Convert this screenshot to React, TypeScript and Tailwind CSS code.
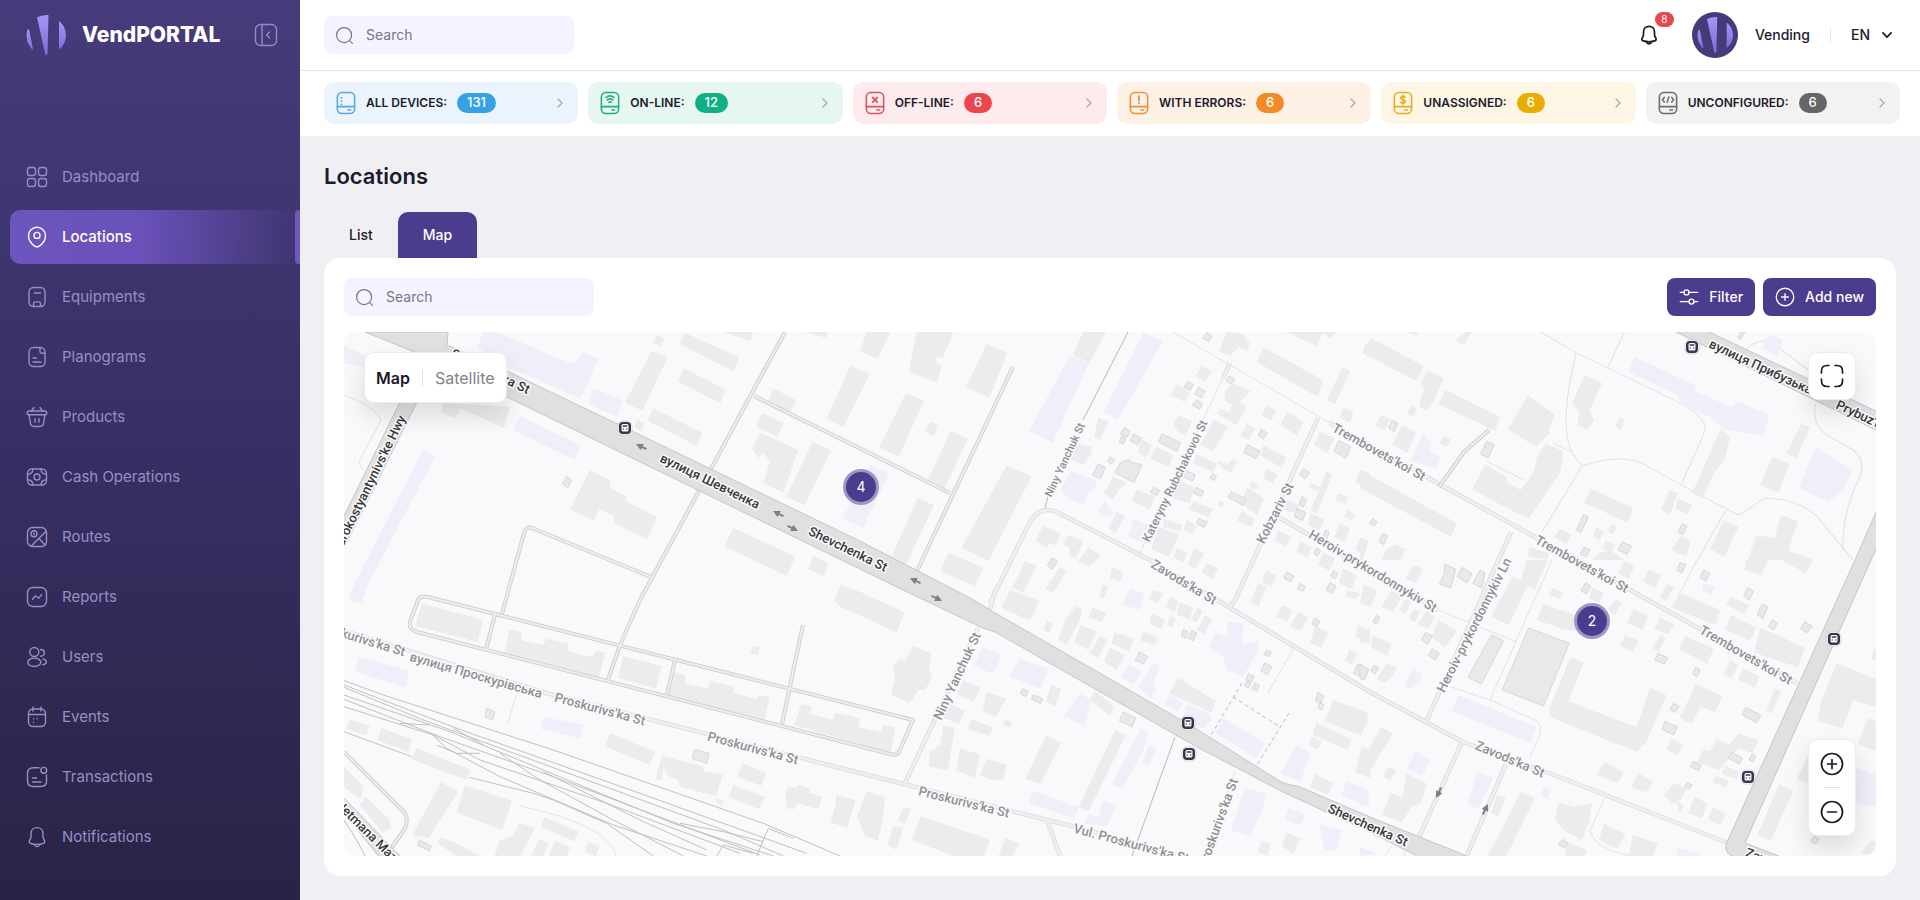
import React from "react";

type IconProps = { children: React.ReactNode; className?: string; width?: number };

function Icon({ children, className = "size-6", width = 1.4 }: IconProps) {
  return (
    <svg viewBox="0 0 24 24" className={className} fill="none" stroke="currentColor" strokeWidth={width} strokeLinecap="round" strokeLinejoin="round" aria-hidden="true">
      {children}
    </svg>
  );
}

const bellPath = (
  <>
    <path d="M12 2.600c-3.600 0-6 2.600-6 6v3.200c0 1.300-.7 2.400-1.400 3.500-.8 1.400-.3 2.800 1.200 3.200 4 1.200 8.400 1.200 12.400 0 1.500-.4 2-1.800 1.200-3.200-.7-1.100-1.400-2.200-1.400-3.500V8.600c0-3.400-2.400-6-6-6Z" />
    <path d="M9.300 19.600c.4 1.300 1.400 2 2.700 2s2.300-.7 2.700-2" />
  </>
);

const menu: { label: string; icon: React.ReactNode; active?: boolean }[] = [
  {
    label: "Dashboard",
    icon: (
      <>
        <rect x="2.500" y="2.500" width="8" height="8" rx="2.500" />
        <rect x="13.500" y="2.500" width="8" height="8" rx="2.500" />
        <rect x="2.500" y="13.500" width="8" height="8" rx="2.500" />
        <rect x="13.500" y="13.500" width="8" height="8" rx="2.500" />
      </>
    ),
  },
  {
    label: "Locations",
    active: true,
    icon: (
      <>
        <path d="M12 2.300c-4.700 0-8.500 3.600-8.500 8.200 0 4.500 3.400 8.800 6.700 10.800 1.200.7 2.400.7 3.600 0 3.300-2 6.700-6.300 6.700-10.800 0-4.600-3.800-8.200-8.500-8.200Z" />
        <circle cx="12" cy="10.400" r="3" />
      </>
    ),
  },
  {
    label: "Equipments",
    icon: (
      <>
        <rect x="4" y="2.500" width="16" height="19" rx="4.500" />
        <path d="M9.500 8h6M8.500 21v-2.500c0-1 .6-1.600 1.600-1.600h3.800c1 0 1.600.6 1.600 1.600V21" />
      </>
    ),
  },
  {
    label: "Planograms",
    icon: (
      <>
        <rect x="4" y="2.500" width="16" height="19" rx="4.500" />
        <path d="M15 2.600v4c0 1 .7 1.700 1.700 1.700H20M8 13h3.500M8 17h8" />
      </>
    ),
  },
  {
    label: "Products",
    icon: (
      <>
        <rect x="2.300" y="6" width="19.400" height="3.800" rx="1.900" />
        <path d="m4 10 1.500 8.500c.3 2 1.500 3 3.500 3h6c2 0 3.200-1 3.500-3L20 10M10 13.800v3.400M14 13.800v3.400M9 2.500 6.500 6M15 2.500 17.500 6" />
      </>
    ),
  },
  {
    label: "Cash Operations",
    icon: (
      <>
        <rect x="2.500" y="4" width="19" height="16" rx="4.500" />
        <circle cx="12" cy="12" r="3" />
        <path d="M8 4.200C7.800 7 6 9 2.700 9.200M16 4.200c.2 2.800 2 4.800 5.300 5M8 19.800c-.2-2.800-2-4.800-5.300-5M16 19.800c.2-2.800 2-4.800 5.300-5" />
      </>
    ),
  },
  {
    label: "Routes",
    icon: (
      <>
        <rect x="2.500" y="2.500" width="19" height="19" rx="5" />
        <circle cx="9" cy="8.800" r="3" />
        <path d="M9 8v1.500M6.500 20.800 20.800 6.500M14 13.500l6 6.500" />
      </>
    ),
  },
  {
    label: "Reports",
    icon: (
      <>
        <rect x="2.500" y="2.500" width="19" height="19" rx="5.500" />
        <path d="m7.500 14.300 2.300-2.900c.4-.4.9-.5 1.300-.1l1.800 1.400c.4.4 1 .3 1.300-.1l2.300-3" />
      </>
    ),
  },
  {
    label: "Users",
    icon: (
      <>
        <circle cx="9.300" cy="7" r="4.500" />
        <ellipse cx="9.300" cy="17.300" rx="6.500" ry="4.200" />
        <path d="M15.500 4.500c2.300 0 3.900 1.300 3.900 3.300s-1.500 3.200-3.600 3.400M18 14c2 .3 3.300 1.300 3.300 2.800s-1.200 2.700-3.600 3" />
      </>
    ),
  },
  {
    label: "Events",
    icon: (
      <>
        <rect x="3.500" y="4" width="17" height="17.500" rx="4.500" />
        <path d="M8 2v4M16 2v4M3.700 9.500h16.600M8.500 13.800h.1M12 13.800h.1M8.500 17.200h.1" />
      </>
    ),
  },
  {
    label: "Transactions",
    icon: (
      <>
        <path d="M14 2.700H8.300c-3.800 0-5.800 2-5.800 5.800v7.200c0 3.800 2 5.800 5.800 5.800h7.400c3.800 0 5.800-2 5.800-5.800V10" />
        <circle cx="18.800" cy="5.300" r="2.900" />
        <path d="M7.500 13h4M7.500 17h8.500" />
      </>
    ),
  },
  { label: "Notifications", icon: bellPath },
];

const stats = [
  { label: "ALL DEVICES:", value: "131", card: "bg-[#ebf4fc]", badge: "bg-[#37a2e2]", icon: "text-[#56a9dc]", mark: <path d="M6 7.500h.1M6 11h.1M6 14.500h.1" strokeWidth="2" /> },
  { label: "ON-LINE:", value: "12", card: "bg-[#e6f6f1]", badge: "bg-[#0fb083]", icon: "text-[#22ad83]", mark: <path d="M6.500 7c2.700-2.200 6.300-2.200 9 0M8 9.600c1.900-1.500 4.100-1.500 6 0M9.600 12.200c.9-.7 1.900-.7 2.800 0" /> },
  { label: "OFF-LINE:", value: "6", card: "bg-[#feebed]", badge: "bg-[#ea474c]", icon: "text-[#dd545d]", mark: <path d="m8.500 7 5 5m0-5-5 5" strokeWidth="2" /> },
  { label: "WITH ERRORS:", value: "6", card: "bg-[#fdf1e6]", badge: "bg-[#f18a27]", icon: "text-[#e99041]", mark: <path d="M11 5.500v5M11 13.300v.2" strokeWidth="2" /> },
  { label: "UNASSIGNED:", value: "6", card: "bg-[#fdf6e4]", badge: "bg-[#e8ad04]", icon: "text-[#e2ae28]", mark: <path d="M13.500 6.800c-.5-.8-1.300-1.100-2.500-1.100-1.500 0-2.500.7-2.500 1.900 0 2.600 5 1.200 5 3.800 0 1.200-1 1.900-2.500 1.900-1.300 0-2.200-.4-2.700-1.300M11 4.500v10" /> },
  { label: "UNCONFIGURED:", value: "6", card: "bg-[#f2f2f3]", badge: "bg-[#666667]", icon: "text-[#6d6d6f]", mark: <path d="M7 6.800 4.800 9.300 7 11.800M15 6.800l2.200 2.500-2.200 2.500M12 6.300l-2 6" /> },
];

function LogoMark({ className }: { className: string }) {
  return (
    <svg viewBox="0 0 40 40" className={className} aria-hidden="true">
      <defs>
        <linearGradient id="mark" x1="0" y1="0" x2="0" y2="1">
          <stop offset="0" stopColor="#a694f8" />
          <stop offset="1" stopColor="#7f6cd6" />
        </linearGradient>
      </defs>
      <g fill="url(#mark)">
        <path d="M11 2.200Q16.500-.2 22.500 0L21.500 38q0 2-1.200 2t-1.300-2Z" />
        <path d="M33 6q7 5.500 7 14.300T33 34.500Z" />
        <path d="M1.500 14.500Q-1 23.500 3 30t4 4L3.300 15.500q-.8-2-1.800-1Z" />
      </g>
    </svg>
  );
}

function SearchField({ id }: { id: string }) {
  return (
    <label htmlFor={id} className="flex h-[38px] w-[250px] items-center gap-3 rounded-lg bg-[#f5f3ff] px-[11px] text-[#787584]">
      <Icon className="size-[19px] shrink-0" width={1.500}>
        <circle cx="11.500" cy="11.500" r="9.500" />
        <path d="m18.500 18.500 3.500 3.500" />
      </Icon>
      <input id={id} type="text" placeholder="Search" aria-label="Search" className="w-full min-w-0 bg-transparent text-sm outline-none placeholder:text-[#787584]" />
    </label>
  );
}

type Tile = { at: string; gray: string; small: string; lilac: string };

const tiles: Tile[] = [
  {
    at: "translate(340 330) scale(.33333)",
    gray:
      "M935,62 983,82 907,242 855,218ZM1035,8 1198,82 1180,124 1020,42ZM1030,115 1156,178 1141,220 1015,155ZM940,235 1086,308 1072,348 922,272ZM890,268 914,280 905,305 882,292ZM950,14 972,24 962,48 938,38ZM1300,175 1368,210 1350,248 1282,218ZM1265,250 1330,278 1314,320 1248,290ZM1262,308 1375,360 1330,488 1270,460 1290,392 1268,370 1256,384 1236,355ZM1418,336 1474,360 1394,526 1338,500ZM1530,108 1590,132 1510,292 1460,266ZM750,420 812,452 808,472 858,500 856,512 952,562 920,628 820,578 824,560 778,538 762,572 690,538ZM1180,594 1366,680 1340,738 1152,648ZM1420,678 1466,700 1452,738 1404,718ZM1502,764 1560,785 1690,845 1670,905 1500,830 1482,810ZM310,220 510,230 492,294 360,235 344,264 303,246ZM1150,6 1240,6 1230,33ZM1400,6 1464,6 1458,24Z",
    small: "M680,440 695,450 684,473 667,463Z",
    lilac:
      "M430,6 470,6 690,100 702,100 730,66 775,86 722,206 470,96 412,50ZM760,175 850,212 832,262 746,222ZM542,258 722,346 704,390 520,300ZM250,356 286,378 60,810 24,800ZM12,44 72,76 74,112 12,100Z",
  },
  {
    at: "translate(340 590) scale(.33333)",
    gray:
      "M245,40 430,90 412,156 226,108ZM508,118 546,126 542,150 610,165 618,146 686,160 684,184 758,202 766,182 796,188 776,264 492,192ZM850,198 964,228 948,296 834,264ZM1002,246 1036,254 1034,280 1104,296 1112,272 1182,290 1180,308 1250,328 1258,314 1290,322 1272,392 982,316ZM1384,342 1414,348 1410,372 1478,390 1486,368 1558,384 1556,412 1622,426 1630,404 1666,412 1652,488 1362,406ZM1240,165 1260,172 1254,196 1230,190ZM30,388 90,408 78,436 18,418ZM125,414 216,448 206,486 112,450ZM230,475 394,540 380,570 215,508ZM812,430 946,486 928,524 794,468ZM965,498 1030,514 1088,528 1092,544 1150,552 1128,618 1020,590 1014,570 984,558 970,530 965,572 946,570ZM1206,520 1278,548 1264,588 1192,560ZM1180,584 1275,622 1258,658 1166,620ZM1130,624 1152,630 1148,644 1128,640ZM1345,590 1368,594 1374,584 1410,596 1408,608 1446,620 1434,658 1374,640 1362,658 1340,655 1336,622ZM1490,614 1546,630 1522,712 1470,698 1486,650ZM304,576 354,606 266,744 216,736ZM374,586 516,632 488,720 350,668ZM76,620 150,690 152,716 128,728 60,646ZM12,530 72,590 62,626 12,590ZM614,682 714,724 704,754 602,710ZM538,700 586,712 540,798 464,798 480,750 516,740ZM598,748 628,760 610,798 572,798ZM645,752 690,772 680,798 626,798ZM745,756 778,768 768,798 734,785ZM300,742 350,760 420,798 350,798 292,760Z",
    small: "M1064,478 1108,490 1100,520 1056,506ZM238,750 274,768 268,782 232,766ZM440,355 465,366 458,390 435,380Z",
    lilac: "M55,200 208,242 196,292 46,245ZM612,380 732,406 722,446 602,416ZM40,0 78,0 66,40 26,30Z",
  },
  {
    at: "translate(850 330) scale(.33333)",
    gray:
      "M50,6 122,6 82,88 30,64ZM200,6 310,6 280,80 262,80 254,98 276,108 262,158 176,124ZM410,42 472,70 418,204 348,172ZM700,6 768,6 718,98 668,75ZM168,188 222,212 146,380 88,352ZM240,275 264,286 250,320 222,304ZM302,302 354,326 284,474 234,450ZM470,406 544,440 416,692 334,654ZM204,504 252,526 168,704 124,680ZM296,668 400,714 374,768 270,724ZM745,264 775,275 750,330 732,320ZM680,340 725,350 722,375 700,404 664,390ZM1055,108 1086,124 1066,156 1036,138ZM980,162 1020,188 1005,216 962,196ZM1130,6 1175,12 1200,40 1190,64 1166,50 1140,78 1108,64ZM1240,52 1418,150 1404,200 1386,192 1220,96ZM1478,112 1500,122 1456,222 1430,210ZM1150,160 1202,184 1170,216 1190,230 1160,286 1100,250 1112,236 1140,250 1146,226 1122,210 1126,184ZM1250,228 1278,242 1264,272 1234,256ZM1312,245 1362,276 1340,315 1290,284ZM1190,282 1216,294 1196,330 1172,318ZM1092,270 1134,290 1088,364 1050,345ZM985,255 1026,272 1008,318 982,304 970,280ZM876,328 906,346 888,382 862,366ZM920,350 970,376 956,412 900,384ZM1040,372 1100,402 1090,426 1028,398ZM1100,394 1134,402 1148,386 1162,396 1142,428 1124,420ZM1240,346 1308,382 1296,414 1230,376ZM1250,414 1282,434 1268,460 1240,446ZM788,440 832,458 806,480 790,508 762,492ZM860,480 916,498 900,540 846,512ZM980,450 1032,470 1020,520 970,506ZM1030,514 1088,536 1076,562 1016,538ZM1190,470 1240,505 1222,555 1175,520ZM1175,544 1214,566 1204,592 1162,572ZM800,544 826,560 796,608 776,596ZM940,566 996,586 990,604 940,590ZM926,590 986,614 956,682 904,656ZM1010,568 1042,590 1024,612 1002,602ZM980,654 1012,670 1002,696 972,684ZM1035,654 1062,672 1036,716 1012,702ZM1068,700 1104,714 1088,748 1056,728ZM580,586 632,612 618,646 596,640 590,654 556,632ZM656,614 700,634 676,686 656,676 660,656 638,642ZM715,652 752,676 720,710 684,696ZM524,692 560,708 520,788 488,772ZM630,712 650,724 608,790 586,776ZM786,712 822,728 808,756 780,744ZM760,762 776,770 760,806 746,798ZM1480,232 1510,248 1500,278 1470,264ZM1410,306 1456,324 1430,370 1392,344ZM1530,420 1560,430 1560,480 1518,456ZM1430,424 1446,434 1400,552 1382,540ZM1465,490 1496,502 1486,522 1456,512ZM1284,600 1324,622 1308,650 1274,632ZM1350,634 1386,652 1372,684 1340,666ZM1420,668 1456,684 1438,722 1404,704ZM1380,548 1424,570 1408,600 1374,586ZM1470,580 1500,596 1484,636 1452,620ZM1530,622 1556,632 1540,672 1516,660ZM1246,720 1280,734 1264,770 1238,758ZM1225,760 1250,772 1230,810 1206,810ZM1480,716 1520,736 1506,778 1466,760ZM1310,6 1420,6 1400,48ZM1420,6 1460,6 1440,28ZM1545,40 1560,45 1560,85 1538,68ZM1490,540 1516,552 1504,572 1484,562ZM1380,456 1410,472 1400,484 1376,472ZM1310,508 1346,526 1330,548 1296,536ZM1205,452 1226,466 1212,480 1196,470ZM1110,510 1124,518 1116,532 1104,524Z",
    small:
      "M838,388 848,398 876,404 852,458 795,428 812,398ZM822,292 840,304 832,320 812,312ZM815,318 828,324 820,344 808,336ZM850,312 874,324 864,344 840,332ZM780,380 795,390 784,402 772,394ZM745,402 766,412 752,446 728,436ZM936,312 992,338 980,364 926,336ZM912,472 930,482 920,496 900,486ZM1004,420 1036,434 1028,454 1000,440ZM1038,472 1062,484 1052,500 1030,488ZM1046,566 1072,576 1062,592 1040,580ZM1144,486 1188,506 1180,526 1134,502ZM1234,298 1252,310 1240,326 1224,316ZM1192,344 1230,364 1218,386 1182,368ZM1014,154 1030,164 1020,182 1002,172ZM1046,172 1066,184 1054,204 1034,192ZM1040,210 1058,220 1048,238 1028,226ZM1070,8 1086,18 1076,34 1058,24ZM1138,138 1154,148 1144,162 1128,152ZM1466,332 1502,350 1488,384 1452,364ZM1360,416 1378,428 1366,446 1348,434ZM1356,500 1370,508 1360,532 1346,524ZM606,684 622,694 606,718 592,706ZM1310,726 1332,738 1322,756 1302,744ZM1350,760 1366,770 1358,784 1342,776ZM1440,758 1458,768 1446,790 1428,780ZM1450,722 1464,730 1456,746 1442,738ZM1400,654 1412,662 1402,678 1392,670ZM1428,600 1438,608 1430,626 1418,620ZM1088,430 1100,440 1092,452 1080,444ZM1340,534 1368,548 1358,572 1334,560Z",
    lilac:
      "M60,405 118,432 38,594 -22,565ZM660,76 716,100 608,338 538,302ZM880,8 940,32 804,270 762,244ZM664,424 740,450 735,475 714,490 700,526 660,508 630,480ZM762,512 790,550 770,560 746,544ZM850,568 896,584 890,644 834,618ZM840,776 880,790 870,815 820,815Z",
  },
  {
    at: "translate(850 590) scale(.33333)",
    gray:
      "M0,4 162,70 140,128 0,60ZM190,168 245,190 238,234 246,262 226,300 206,300 178,340 122,314 136,268 130,232 148,208 164,214ZM480,0 568,32 540,92 454,54ZM590,92 608,102 598,130 580,120ZM680,48 696,60 690,90 650,164 624,150 650,80ZM728,52 768,70 756,96 716,82ZM692,106 740,124 716,180 672,156ZM750,138 774,150 742,204 718,190ZM794,126 852,146 836,184 784,160ZM780,172 824,196 800,240 762,216ZM880,124 924,144 912,166 872,152ZM905,70 946,90 934,118 898,100ZM910,0 940,10 924,40 898,26ZM964,20 986,34 974,66 948,50ZM990,36 1030,54 1018,88 980,74ZM1044,54 1058,62 1040,98 1022,88ZM1066,76 1086,88 1064,132 1040,120ZM962,78 978,86 966,114 950,104ZM340,270 392,294 370,336 320,312ZM604,284 634,296 616,348 588,334ZM410,305 470,326 455,348 438,382 398,362ZM734,302 792,348 780,378 720,330ZM300,340 344,362 328,402 282,384ZM364,388 428,412 418,438 354,416ZM466,388 486,398 478,414 458,406ZM280,408 314,412 304,476 294,540 236,530 240,486 270,466ZM330,476 390,492 374,564 318,540ZM410,506 470,524 460,566 432,572 390,556ZM588,436 634,458 570,582 526,566ZM796,420 828,434 716,664 686,650ZM50,605 106,622 96,696 84,752 42,736 22,678ZM160,650 184,656 164,702 144,690ZM130,708 160,712 140,780 112,766ZM212,678 420,750 402,798 310,798 186,750ZM465,744 508,760 488,798 446,798ZM0,630 14,630 0,680ZM985,264 1098,334 1084,368 958,310ZM1450,330 1556,370 1526,434 1424,392ZM1400,398 1504,448 1492,480 1388,434ZM1385,440 1416,456 1404,478 1376,466ZM1536,470 1560,480 1560,565 1516,545ZM1396,552 1450,580 1434,616 1378,590ZM1310,728 1352,745 1330,790 1296,770ZM1235,752 1262,760 1254,798 1224,785ZM1295,46 1328,60 1310,96 1278,80ZM1345,66 1376,84 1350,124 1320,108ZM1396,108 1434,126 1414,174 1380,158ZM1216,0 1244,0 1226,48 1202,36ZM1525,106 1560,120 1560,162 1516,140ZM1498,178 1522,188 1506,224 1484,212ZM1490,0 1530,10 1520,26 1484,20Z",
    small:
      "M1000,118 1014,126 1006,146 994,138ZM1026,122 1040,130 1030,152 1014,144ZM868,186 894,200 880,222 856,210ZM1250,180 1264,186 1256,200 1242,194ZM1245,218 1266,230 1252,254 1232,242ZM1195,250 1212,260 1204,276 1188,268ZM1190,272 1202,280 1196,294 1184,288ZM1214,278 1228,286 1220,304 1206,296ZM1395,84 1410,94 1400,110 1386,102ZM1404,308 1422,318 1410,342 1396,332ZM1412,338 1422,344 1414,360 1404,352ZM1524,222 1556,238 1544,266 1510,250ZM518,296 534,304 528,320 512,312ZM550,314 578,326 572,340 544,328ZM820,366 858,384 846,410 808,392Z",
    lilac:
      "M398,172 456,196 430,252 372,228ZM510,208 596,236 572,296 476,258ZM690,310 722,330 704,412 642,376ZM840,222 875,246 852,284 812,260ZM910,218 930,226 910,280 920,300 900,324 866,292ZM1132,95 1180,100 1176,164 1230,150 1220,190 1180,260 1130,240 1120,200 1076,170 1096,130 1132,140ZM958,314 1000,336 984,364 942,344ZM1010,344 1076,370 1086,390 1060,416 1000,380ZM1120,385 1246,460 1220,504 1096,430ZM872,416 896,430 880,480 818,598 786,582ZM895,464 920,474 898,530 876,520ZM548,602 686,652 672,686 538,640ZM760,630 798,644 770,710 704,700 716,672 744,680ZM1340,466 1382,490 1350,576 1290,550ZM1184,594 1250,612 1240,650 1200,740 1142,720ZM840,0 882,16 870,60 818,44ZM1488,574 1556,600 1556,650 1474,618ZM1316,654 1366,674 1354,706 1304,690ZM1406,702 1476,720 1458,782 1424,780Z",
  },
  {
    at: "translate(1360 260) scale(.35714 .33333)",
    gray:
      "M30,234 178,318 158,364 8,278ZM190,332 234,354 208,420 186,452 164,438 180,388 170,366ZM240,390 392,470 378,512 220,432ZM470,406 546,464 528,510 534,520 520,528 494,560 414,508ZM146,436 160,446 146,470 130,460ZM60,464 84,476 72,510 42,496ZM120,494 156,518 132,580 90,552ZM236,528 254,538 242,562 220,548ZM628,346 678,370 642,452 656,480 636,510 608,494 614,458 594,430ZM724,470 740,480 732,512 716,500ZM1010,505 1036,530 1020,600 990,640 960,714 930,700ZM520,550 570,575 560,640 472,776 400,738 314,688 350,614 410,650 414,670 450,690 484,640 496,590ZM646,686 764,744 750,788 628,728ZM868,690 890,700 868,762 842,750ZM890,714 930,734 918,762 884,748ZM1236,490 1260,502 1222,594 1194,580ZM1155,590 1202,612 1172,698 1120,674ZM0,630 272,790 254,830 0,684ZM1018,780 1060,800 1020,890 980,866ZM1180,766 1226,784 1200,872 1270,900 1086,900 1110,826 1160,834ZM900,826 926,846 914,890 870,870ZM662,800 684,818 668,842 654,830ZM704,792 718,802 708,824 694,814ZM686,842 716,856 704,878 680,866ZM560,806 592,824 578,852 542,832ZM476,862 530,880 524,900 468,890ZM0,836 22,848 8,900 0,900ZM100,854 128,868 112,900 62,900 72,870ZM296,216 314,216 290,256 266,240ZM135,216 166,216 158,228ZM670,880 700,870 740,900 650,900Z",
    small:
      "M90,480 106,490 96,514 80,504ZM355,544 376,554 358,594 338,582ZM626,764 640,770 618,818 606,810ZM902,792 916,798 904,824 890,816ZM36,776 48,786 40,798 26,790ZM64,820 78,828 66,854 54,846ZM735,846 760,858 748,882 722,870ZM628,862 644,870 634,890 616,882ZM1068,216 1078,216 1066,238 1058,232Z",
    lilac:
      "M768,290 938,376 940,395 1040,440 1060,424 1146,466 1130,528 1020,508 980,470 908,440 880,400 752,336ZM1150,222 1184,242 1168,288 1124,262ZM1276,562 1380,630 1352,690 1310,726 1228,684ZM176,520 200,550 196,572 224,590 212,628 142,600Z",
  },
  {
    at: "translate(1360 560) scale(.35714 .33333)",
    gray:
      "M150,14 176,28 156,70 128,56ZM10,72 48,92 30,140 0,130ZM88,92 118,110 92,156 60,140ZM126,116 142,126 128,162 108,152ZM150,146 168,156 154,186 136,176ZM186,152 210,170 190,208 162,192ZM220,180 272,212 238,262 200,232ZM36,228 90,250 76,288 58,278 30,262ZM76,308 104,324 88,350 70,368 46,358ZM0,200 28,212 14,250 0,250ZM60,500 92,522 18,650 -10,630ZM0,460 24,478 0,530ZM426,48 470,72 418,196 368,170ZM466,0 526,0 490,88 450,66ZM512,132 620,172 606,214 560,204 494,180ZM540,84 570,98 560,118 526,104ZM590,290 626,308 584,424 730,484 775,500 812,384 858,406 800,550 774,574 690,540 534,472 530,446ZM650,82 682,98 670,128 640,116ZM716,118 734,126 714,166 694,150ZM766,146 806,168 790,210 748,188ZM742,226 780,242 764,276 728,258ZM840,172 880,194 862,222 824,206ZM842,226 856,234 836,276 818,264ZM810,28 844,46 826,84 792,64ZM860,72 880,82 856,122 840,110ZM740,2 768,20 752,56 724,40ZM900,100 1008,150 996,196 870,142ZM1038,110 1090,136 1078,162 1026,136ZM1040,166 1110,204 1092,244 1022,208ZM1120,204 1190,236 1246,262 1226,322 1104,278ZM912,228 990,266 972,312 894,268ZM1036,300 1058,314 1040,356 1018,340ZM1072,324 1118,350 1106,384 1058,358ZM940,372 1016,408 994,456 954,440 928,492 896,474ZM1160,384 1180,394 1152,462 1138,452ZM872,534 906,556 890,586 858,570ZM1080,0 1142,0 1124,46 1076,30ZM1180,0 1270,0 1248,40ZM1335,310 1445,356 1445,440 1380,420 1352,504 1282,484 1290,430 1316,360ZM1422,474 1445,484 1445,574 1394,552ZM1174,672 1214,692 1150,842 1112,826ZM1430,840 1445,845 1440,888 1402,880ZM684,606 738,636 722,670 664,644ZM780,640 820,664 802,698 758,680ZM880,668 914,686 898,720 872,732 852,704ZM936,710 972,730 958,774 918,760ZM988,742 1024,762 1010,796 974,778ZM884,724 908,736 896,762ZM556,728 600,740 650,730 640,790 622,840 570,810 546,780ZM684,792 744,822 720,866 668,840ZM764,826 834,850 820,888 752,888ZM578,846 636,870 630,888 574,888ZM450,696 490,714 410,888 358,888ZM384,706 408,714 386,770 366,760ZM130,640 188,672 170,730 146,738 116,788 62,764 86,700 120,712ZM80,620 100,632 84,664 64,648ZM1000,536 1034,556 1060,520 1114,540 1100,580 1060,566 1030,600 1004,630 944,606 960,570 980,572ZM1020,618 1062,636 1056,658 1014,642ZM994,646 1032,664 1024,682 988,668ZM1222,660 1256,580 1256,670ZM1437,270 1445,262 1445,300 1432,300Z",
    small:
      "M472,204 586,250 514,438 398,390ZM368,224 402,242 340,372 302,352ZM238,12 268,28 254,84 222,72 236,42ZM286,22 314,40 300,68 272,50ZM336,30 350,38 342,84 316,70ZM46,166 56,172 46,192 36,186ZM184,218 202,228 190,252 172,240ZM202,266 222,280 210,300 192,286ZM40,316 52,324 42,342 30,332ZM0,312 24,328 12,360 0,354ZM632,68 646,78 634,102 618,92ZM896,8 912,14 902,38 888,30ZM962,30 980,40 968,64 952,52ZM1086,82 1102,94 1090,120 1074,108ZM1126,132 1142,140 1128,176 1112,164ZM1154,180 1168,190 1158,210 1144,200ZM1246,186 1266,198 1252,218 1234,206ZM834,280 862,294 852,312 826,300ZM940,322 952,330 944,350 932,342ZM878,430 894,440 882,458 868,448ZM854,484 888,500 878,524 846,508ZM1080,442 1122,466 1110,488 1070,464ZM1040,576 1070,594 1062,612 1030,594ZM1098,582 1108,588 1100,606 1090,600ZM934,604 956,616 948,632 924,620ZM916,668 930,676 922,688 908,680ZM568,838 582,848 572,864 556,854ZM1272,828 1286,838 1276,852 1262,844Z",
    lilac:
      "M276,406 494,500 478,550 256,454ZM150,325 174,346 164,370 136,388 124,372ZM156,574 196,600 174,648 130,624ZM330,636 372,654 332,748 300,730ZM516,682 534,690 524,716 504,706ZM960,70 996,80 982,104 960,94ZM890,864 960,882 950,888 885,888ZM1388,624 1445,645 1445,740 1388,728ZM0,680 24,690 14,730 0,736ZM0,860 50,884 0,888Z",
  },
];

const lanes =
  "M785,332 640,600 620,645 608,680M754,396 950,493M1013,367 917,571M651,577 532,528Q526,526 524,533L502,614M428,597 913,720 899,752Q896,756 890,754L417,632Q408,629 410,622L418,600Q420,595 428,597M495,615 486,649M675,660 667,695M803,625 782,724M344,752 405,813Q409,822 404,830L390,850M1489,430 1464,452 1439,487";
const streets =
  "M344,631 546,693 860,773 1047,820 1080,828 1175,856M995,590 990,610M978,628 905,783M990,603 1030,522Q1040,505 1057,512L1150,560 1217,600 1370,692 1463,742 1549,773 1728,843M1230,363 1223,378M1318,418 1235,600 1230,607M1280,518 1438,610M1330,423 1428,478 1535,537 1630,590 1797,683M1511,532 1426,722M1462,742 1419,837M1506,764 1467,855M1047,820 1060,856";
const faint =
  "M1173,332 1330,423M1230,363 1140,553M1517,642 1438,610M1552,560 1490,700M1451,687 1490,700 1535,720Q1543,725 1539,737L1530,757M1697,560 1678,597M1293,649 1268,693M1235,772 1205,856M517,692 508,723M1605,798 1590,830Q1592,843 1610,850L1630,856M344,395Q378,408 381,420L360,460Q358,466 364,470M520,806Q610,825 616,856M1392,845 1385,856M1407,846 1404,856";
const footpaths =
  "M505,216 605,278 870,415Q960,460 966,500Q968,520 900,670M605,278Q555,500 595,580L622,618 510,815M540,550 590,575M622,618Q720,580 790,610L960,710 1060,765Q1100,740 1130,716Q1220,710 1280,770L1380,900M740,216 695,320M1025,750 945,900M1276,430Q1265,490 1300,520L1380,570Q1420,600 1395,660Q1350,760 1352,870M1080,270Q1110,235 1150,245L1255,330M355,604 460,660";
const rails =
  "M12,272 130,315 640,480 1270,700 1500,798M12,285 350,415 900,610 1400,790M12,292 250,390 1150,720 1330,798M12,315 330,425 1000,700 1300,798M12,328 300,440 640,560 1260,795M12,350 280,435 420,510 800,640 1200,790M12,425 215,500M275,432 320,475 480,560 820,705 1100,798M388,562 580,610 640,630 800,700 940,798M290,465 350,490 420,490M180,400 270,405M340,415 430,465M480,490 600,570 820,690 1030,798M610,545 900,690 1100,780M1020,700 1150,725 1270,755M1250,798 1285,715 1360,745M1130,798 1150,765 1240,790M12,690 50,750 75,798";

type Label = { text: string; x: number; y: number; angle: number; anchor?: "start" | "end"; strong?: boolean; size?: number };

const labels: Label[] = [
  { text: "вулиця Шевченка", x: 710, y: 481, angle: 26, strong: true },
  { text: "Shevchenka St", x: 848, y: 549, angle: 26, strong: true },
  { text: "Shevchenka St", x: 1368, y: 825, angle: 24, strong: true },
  { text: "Shevchenka St", x: 529, y: 390, angle: 26, anchor: "end", strong: true },
  { text: "Starokostyantynivs'ke Hwy", x: 402, y: 416, angle: -64, anchor: "end", strong: true },
  { text: "вулиця Прибузька", x: 1710, y: 343, angle: 25, anchor: "start", strong: true },
  { text: "Prybuz'ka St", x: 1837, y: 404, angle: 25, anchor: "start", strong: true },
  { text: "Hetmana Mazepy St", x: 338, y: 802, angle: 45, anchor: "start", strong: true },
  { text: "Zavods'ka St", x: 1746, y: 852, angle: 20, anchor: "start", strong: true },
  { text: "Proskurivs'ka St", x: 405, y: 652, angle: 17, anchor: "end" },
  { text: "вулиця Проскурівська", x: 476, y: 675, angle: 16 },
  { text: "Proskurivs'ka St", x: 600, y: 709, angle: 15 },
  { text: "Proskurivs'ka St", x: 753, y: 748, angle: 15 },
  { text: "Proskurivs'ka St", x: 964, y: 802, angle: 14 },
  { text: "Vul. Proskurivs'ka St", x: 1074, y: 828, angle: 15, anchor: "start" },
  { text: "Proskurivs'ka St", x: 1234, y: 779, angle: -70, anchor: "end" },
  { text: "Niny Yanchuk St", x: 957, y: 676, angle: -65 },
  { text: "Niny Yanchuk St", x: 1065, y: 460, angle: -65, size: 11 },
  { text: "Kateryny Rubchakovoi St", x: 1175, y: 481, angle: -64, size: 12 },
  { text: "Kobzariv St", x: 1275, y: 513, angle: -63 },
  { text: "Zavods'ka St", x: 1184, y: 582, angle: 31 },
  { text: "Trembovets'koi St", x: 1379, y: 452, angle: 29 },
  { text: "Heroiv-prykordonnykiv St", x: 1373, y: 571, angle: 31 },
  { text: "Heroiv-prykordonnykiv Ln", x: 1474, y: 625, angle: -63 },
  { text: "Trembovets'koi St", x: 1582, y: 564, angle: 29 },
  { text: "Trembovets'koi St", x: 1746, y: 655, angle: 30 },
  { text: "Zavods'ka St", x: 1510, y: 759, angle: 23 },
];

const arrows = [
  { x: 642, y: 447, angle: 206 },
  { x: 779, y: 514, angle: 206 },
  { x: 792, y: 528, angle: 26 },
  { x: 916, y: 581, angle: 206 },
  { x: 936, y: 598, angle: 26 },
  { x: 1439, y: 792, angle: 115 },
  { x: 1485, y: 810, angle: -65 },
];

const stops = [
  [625, 428],
  [1188, 723],
  [1189, 754],
  [1692, 347],
  [1834, 639],
  [1748, 777],
];

const clusters = [
  { x: 861, y: 487, count: 4 },
  { x: 1592, y: 621, count: 2 },
];

function CityMap() {
  return (
    <svg viewBox="344 332 1532 524" preserveAspectRatio="xMidYMid slice" className="absolute inset-0 size-full" role="img" aria-label="Map of locations">
      <rect x="344" y="332" width="1532" height="524" fill="#f9f9fb" />
      <g fill="none" stroke="#e2e2e4" strokeWidth="1">
        <path d={faint} />
        <path d={footpaths} transform="translate(1360 260) scale(.35714 .33333)" strokeWidth="3" />
      </g>
      <path d={rails} transform="translate(340 590) scale(.33333)" fill="none" stroke="#c0c0c2" strokeWidth="3" />
      {tiles.map((t) => (
        <g key={t.at} transform={t.at}>
          <path d={t.gray} fill="#ececee" />
          <path d={t.lilac} fill="#f0eef9" />
          <path d={t.small} fill="#e9e9eb" stroke="#d3d3d5" strokeWidth="2.500" />
        </g>
      ))}
      <g fill="none" strokeLinejoin="round">
        <path d={streets} stroke="#dedee0" strokeWidth="4.500" />
        <path d={streets} stroke="#f0f0f2" strokeWidth="2.500" />
        <path d={lanes} stroke="#cfcfd1" strokeWidth="4" />
        <path d={lanes} stroke="#eeeef0" strokeWidth="2" />
        <path d="M1128,332 1083,420M1048,496 1045,508M1175,737 1132,856" stroke="#b9b9bb" />
        <path d="M1242,683 1210,737M1233,697 1280,727M1289,713 1257,765" stroke="#bcbcbe" strokeDasharray="4 3" />
      </g>
      <g fill="#e0e0e1" stroke="#c6c6c8" strokeWidth="1">
        <path d="M420,361 437,362 344,548 334,548 344,516Z" />
        <path d="M365,332 448,332 447,345 507,371 630,430 860,541 972,599 990,610 1190,725 1283,783 1300,787 1370,817 1467,856 1421,858 1370,832 1283,792 1197,747 995,632 983,628 903,590 860,569 630,457 507,397 450,370 417,353Z" />
        <path d="M1880,503 1855,560 1727,842Q1722,853 1736,858L1784,858 1745,843 1871,560 1880,542Z" />
        <path d="M1672,330 1705,330 1880,413 1880,432Z" />
        <path d="M340,794 402,858 380,858 340,808Z" />
      </g>
      {arrows.map((a) => (
        <path key={a.x} d="M-5 0H2" transform={`translate(${a.x} ${a.y}) rotate(${a.angle})`} stroke="#808083" strokeWidth="2" markerEnd="url(#tip)" />
      ))}
      <defs>
        <marker id="tip" viewBox="0 0 6 6" refX="2" refY="3" markerWidth="7" markerHeight="7" markerUnits="userSpaceOnUse" orient="auto">
          <path d="M0 0 6 3 0 6Z" fill="#808083" />
        </marker>
      </defs>
      <g fontFamily="Roboto, 'Liberation Sans', sans-serif" fontWeight="500" paintOrder="stroke" stroke="#fafafc" strokeWidth="3" strokeLinejoin="round" dominantBaseline="central">
        {labels.map((l) => (
          <text key={`${l.x}-${l.y}`} transform={`translate(${l.x} ${l.y}) rotate(${l.angle})`} textAnchor={l.anchor ?? "middle"} fontSize={l.size ?? 13} fill={l.strong ? "#37373a" : "#8f8f92"}>
            {l.text}
          </text>
        ))}
      </g>
      {stops.map(([x, y]) => (
        <g key={`${x}-${y}`} transform={`translate(${x} ${y})`}>
          <rect x="-7" y="-7" width="14" height="14" rx="5" fill="#fff" stroke="#d5d3e2" />
          <rect x="-6" y="-6" width="12" height="12" rx="4" fill="#37344d" />
          <rect x="-3.500" y="-4" width="7" height="7.500" rx="1.500" fill="#fff" />
          <path d="M-2.300-2h4.600M-2.300 1h1M1.300 1h1" stroke="#37344d" strokeWidth="1.300" />
        </g>
      ))}
      {clusters.map((c) => (
        <g key={c.x} transform={`translate(${c.x} ${c.y})`}>
          <circle r="18" fill="#9f96c8" />
          <circle r="15" fill="#4b3c8e" />
          <text y="5" textAnchor="middle" fontFamily="Inter, sans-serif" fontSize="14" fill="#fff">
            {c.count}
          </text>
        </g>
      ))}
    </svg>
  );
}

export default function App() {
  return (
    <div className="flex min-h-screen bg-[#f0eff4] font-['Inter',sans-serif] text-[#1c1a2b]">
      <aside className="w-[300px] shrink-0 bg-linear-to-b from-[#473b7b] via-[#372f64] to-[#292445]">
        <div className="flex h-[70px] items-center pr-[22px] pl-[26px]">
          <LogoMark className="size-10" />
          <span className="ml-4 text-[21px] font-extrabold text-white">VendPORTAL</span>
          <button type="button" aria-label="Collapse menu" className="ml-auto text-[#9388c8]">
            <Icon className="size-6">
              <rect x="1.500" y="1.500" width="21" height="21" rx="5" />
              <path d="M8 1.500v21M15.500 9l-3 3 3 3" />
            </Icon>
          </button>
        </div>
        <nav className="mt-20 flex flex-col gap-1.5 pl-2.5">
          {menu.map((m) => (
            <a
              key={m.label}
              href="#"
              aria-current={m.active ? "page" : undefined}
              className={
                m.active
                  ? "relative flex h-[54px] items-center gap-[13px] rounded-l-[10px] bg-linear-to-r from-[#6c55bd] from-0% via-[#6a51b9] via-45% to-transparent pl-[15px] text-[15px] font-medium text-white"
                  : "flex h-[54px] items-center gap-[13px] pl-[15px] text-[15px] text-[#978ec6]"
              }
            >
              <Icon>{m.icon}</Icon>
              {m.label}
              {m.active && <span className="absolute inset-y-0 right-0 w-[5px] rounded-l bg-[#6f57be]" />}
            </a>
          ))}
        </nav>
      </aside>

      <div className="flex min-w-0 flex-1 flex-col">
        <header className="bg-white">
          <div className="flex h-[71px] items-center border-b border-[#e3e2e8] pr-[26px] pl-6">
            <SearchField id="global-search" />
            <button type="button" aria-label="Notifications, 8 new" className="relative ml-auto">
              <Icon className="size-[22px]" width={1.900}>{bellPath}</Icon>
              <span className="absolute -top-3 left-[17px] flex h-[15px] w-[19px] items-center justify-center rounded-full bg-[#e5484d] text-[10px] text-white">8</span>
            </button>
            <button type="button" className="ml-8 flex items-center gap-[17px] text-sm font-medium">
              <span className="flex size-[46px] items-center justify-center rounded-full bg-[#463a7b]">
                <LogoMark className="size-9" />
              </span>
              Vending
            </button>
            <span className="mx-5 h-4 w-px bg-[#e9e8ee]" />
            <button type="button" className="flex items-center gap-2.5 text-sm font-medium">
              EN
              <Icon className="size-3.5" width={3}>
                <path d="m5 8.500 7 7 7-7" />
              </Icon>
            </button>
          </div>
          <div className="grid grid-cols-6 gap-2.5 pt-[11px] pr-5 pb-3 pl-6">
            {stats.map((s) => (
              <a key={s.label} href="#" className={`flex h-[42px] items-center rounded-[10px] px-3 ${s.card}`}>
                <svg viewBox="0 0 22 26" className={`h-6 w-5 shrink-0 ${s.icon}`} fill="none" stroke="currentColor" strokeWidth="1.700" strokeLinecap="round" strokeLinejoin="round" aria-hidden="true">
                  <rect x="1.500" y="1.500" width="19" height="23" rx="5" />
                  <path d="M1.500 17h19M13 20.700h3" />
                  {s.mark}
                </svg>
                <span className="ml-2.5 text-xs font-semibold whitespace-nowrap">{s.label}</span>
                <span className={`ml-2.5 flex h-5 items-center rounded-full px-2.5 text-[13px] font-medium text-white ${s.badge}`}>{s.value}</span>
                <Icon className="ml-auto size-3 text-[#a9a8b2]" width={2.500}>
                  <path d="m8 4 8 8-8 8" />
                </Icon>
              </a>
            ))}
          </div>
        </header>

        <main className="flex flex-1 flex-col p-6">
          <h1 className="text-[22px] leading-8 font-semibold">Locations</h1>
          <div className="mt-5 flex text-sm font-medium" role="tablist">
            <button type="button" role="tab" aria-selected="false" className="h-[46px] px-[25px]">List</button>
            <button type="button" role="tab" aria-selected="true" className="h-[46px] rounded-t-[10px] bg-[#4b3c8e] px-[25px] text-white">Map</button>
          </div>
          <section className="flex flex-1 flex-col gap-4 rounded-2xl bg-white p-5">
            <div className="flex items-center gap-2">
              <SearchField id="location-search" />
              <button type="button" className="ml-auto flex h-[38px] items-center gap-2.5 rounded-lg bg-[#4b3c8e] px-3 text-sm font-medium text-white">
                <Icon className="size-5" width={1.600}>
                  <circle cx="9" cy="6.500" r="3" />
                  <circle cx="15" cy="17.500" r="3" />
                  <path d="M1.500 6.500H6M12 6.500h10.500M1.500 17.500H12M18 17.500h4.500" />
                </Icon>
                Filter
              </button>
              <button type="button" className="flex h-[38px] items-center gap-2.5 rounded-lg bg-[#4b3c8e] px-3 text-sm font-medium text-white">
                <Icon className="size-5" width={1.600}>
                  <circle cx="12" cy="12" r="10.500" />
                  <path d="M12 8v8M8 12h8" />
                </Icon>
                Add new
              </button>
            </div>
            <div className="relative min-h-[524px] flex-1 overflow-hidden rounded-xl">
              <CityMap />
              <div className="absolute top-5 left-5 flex h-[51px] items-center rounded-[10px] border border-[#ececf0] bg-white px-[11px] text-base shadow-[0_12px_24px_rgba(0,0,0,0.12)]">
                <button type="button" className="font-semibold">Map</button>
                <span className="mx-3 h-4 w-px bg-[#e2e2e6]" />
                <button type="button" className="text-[#83828b]">Satellite</button>
              </div>
              <button type="button" aria-label="Full screen" className="absolute top-5 right-5 flex size-12 items-center justify-center rounded-[10px] border border-[#ececf0] bg-white shadow-[0_12px_24px_rgba(0,0,0,0.12)]">
                <Icon width={1.700}>
                  <path d="M1.500 9V7c0-3.500 2-5.500 5.500-5.500h2M15 1.500h2c3.500 0 5.500 2 5.500 5.500v2M22.500 15v2c0 3.500-2 5.500-5.500 5.500h-2M9 22.500H7c-3.500 0-5.500-2-5.500-5.500v-2" />
                </Icon>
              </button>
              <div className="absolute right-5 bottom-5 flex w-12 flex-col items-center rounded-[10px] border border-[#ececf0] bg-white shadow-[0_12px_24px_rgba(0,0,0,0.12)]">
                <button type="button" aria-label="Zoom in" className="flex h-[47px] items-center">
                  <Icon width={1.700}>
                    <circle cx="12" cy="12" r="10.500" />
                    <path d="M12 7.500v9M7.500 12h9" />
                  </Icon>
                </button>
                <span className="h-px w-4 bg-[#e2e2e6]" />
                <button type="button" aria-label="Zoom out" className="flex h-[47px] items-center">
                  <Icon width={1.700}>
                    <circle cx="12" cy="12" r="10.500" />
                    <path d="M7.500 12h9" />
                  </Icon>
                </button>
              </div>
            </div>
          </section>
        </main>
      </div>
    </div>
  );
}
